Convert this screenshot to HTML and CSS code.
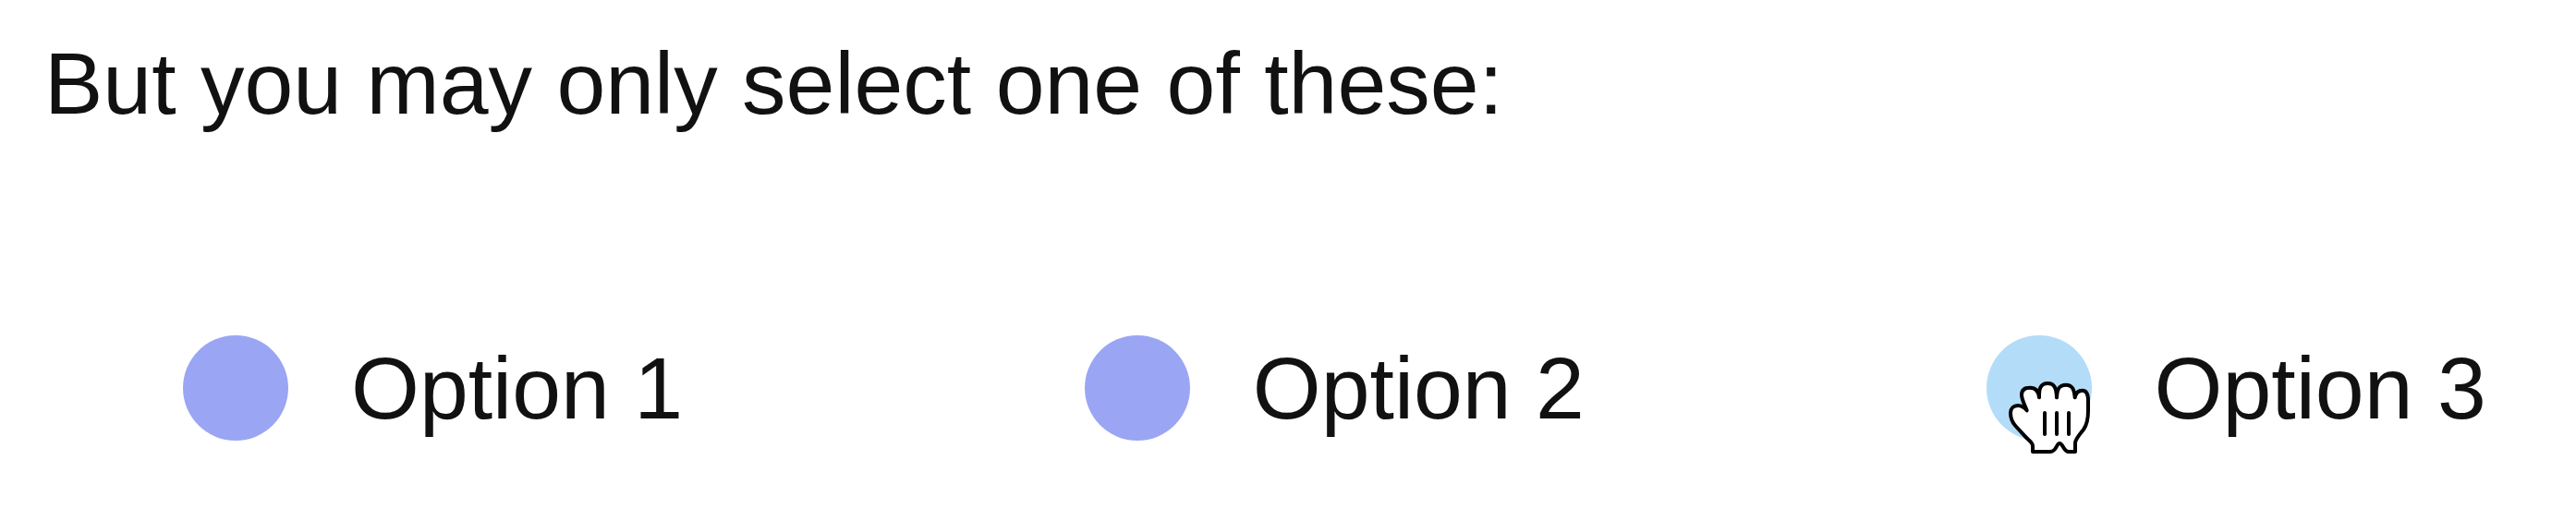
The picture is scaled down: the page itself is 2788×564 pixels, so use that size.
FILE: index.html
```html
<!DOCTYPE html>
<html lang="en">
<head>
<meta charset="utf-8">
<title>Options</title>
<link rel="stylesheet" href="styles.css">
</head>
<body>
<fieldset class="question">
<legend class="prompt">But you may only select one of these:</legend>
<div class="options">
<label class="option"><input class="dot" type="radio" name="choice"><span>Option 1</span></label>
<label class="option"><input class="dot" type="radio" name="choice"><span>Option 2</span></label>
<label class="option"><input class="dot dot-hover" type="radio" name="choice"><span>Option 3</span>
<svg class="hand" viewBox="126 186 276 246" aria-hidden="true"><path d="M210 420V401C210 390 196 382 186 371L154 336C144 325 138 307 138 294C138 279 148 270 162 270C175 270 183 276 191 286C186 271 174 252 174 235C174 219 185 212 201 212C219 212 229 223 231 244C230 219 233 198 259 198C282 198 287 217 288 244C289 220 294 203 318 203C341 203 345 222 347 244C350 229 357 221 371 221C386 221 390 235 390 254V287C390 313 386 332 375 348C364 362 350 377 348 391V420H327C310 420 309 393 297 393C287 393 287 420 267 420Z"/><path d="M249 294V363M288 294V363M327 294V363"/></svg></label>
</div>
</fieldset>
</body>
</html>
```
FILE: styles.css
```css
body {
  margin: 0;
  background: #fff;
  color: #111;
  font: 95px/104px "Liberation Sans", Arial, sans-serif;
}
.question {
  margin: 0;
  padding: 0;
  border: 0;
  min-width: 0;
}
.prompt {
  padding: 38px 48px 0;
}
.options {
  display: grid;
  grid-template-columns: 35vw 35vw 1fr;
  padding: 221px 0 80px 198px;
}
.option {
  position: relative;
  display: flex;
  align-items: center;
  gap: 68px;
  white-space: nowrap;
}
.dot {
  appearance: none;
  flex: none;
  width: 114px;
  height: 114px;
  margin: 0;
  border-radius: 50%;
  background: #9aa6f4;
}
.dot-hover {
  background: #b3dcf9;
}
.hand {
  position: absolute;
  left: 22px;
  top: 48px;
  width: 92px;
  height: 82px;
  fill: #fff;
  stroke: #000;
  stroke-width: 12;
  stroke-linejoin: round;
  stroke-linecap: round;
}
```
